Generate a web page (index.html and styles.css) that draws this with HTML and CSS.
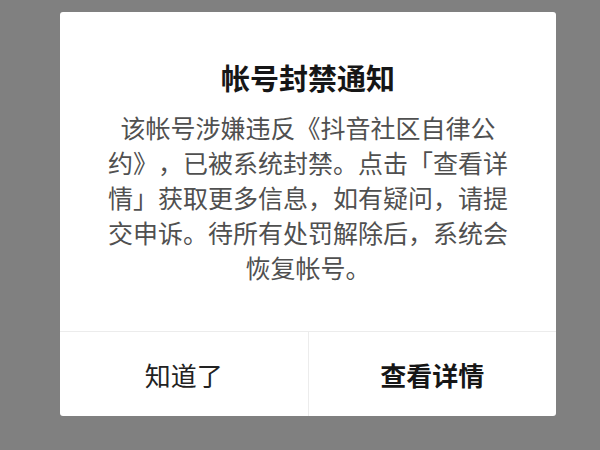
FILE: index.html
```html
<!DOCTYPE html>
<html lang="zh-CN">
<head>
    <meta charset="UTF-8">
    <title>帐号封禁通知</title>
    <link rel="stylesheet" href="styles.css">
</head>
<body>
    <!-- Ban notice dialog -->
    <div class="mask">
        <div class="dialog">
            <div class="dialog-content">
                <h2 class="dialog-title">帐号封禁通知</h2>
                <p class="dialog-text">该帐号涉嫌违反《抖音社区自律公约》，已被系统封禁。点击「查看详情」获取更多信息，如有疑问，请提交申诉。待所有处罚解除后，系统会恢复帐号。</p>
            </div>
            <div class="dialog-actions">
                <button class="dialog-btn" type="button">知道了</button>
                <button class="dialog-btn primary" type="button">查看详情</button>
            </div>
        </div>
    </div>
</body>
</html>
```

FILE: styles.css
```css
/* Basic Styling */
html, body {
    margin: 0;
    height: 100%;
}

body {
    font-family: "Noto Sans CJK SC", "Noto Sans", sans-serif;
    background-color: #808080;
    color: #161616;
}

.mask {
    display: flex;
    justify-content: center;
    padding-top: 12px;
}

.dialog {
    width: 496px;
    height: 404px;
    margin-left: 16px;
    background-color: #fff;
    border-radius: 3px;
    display: flex;
    flex-direction: column;
    overflow: hidden;
}

.dialog-content {
    flex: 1;
    padding: 45px 0 0;
    text-align: center;
}

.dialog-title {
    margin: 0;
    font-size: 29px;
    line-height: 40px;
    font-weight: 700;
    color: #161616;
}

.dialog-text {
    width: 400px;
    margin: 13px auto 0;
    font-size: 25px;
    line-height: 35px;
    color: #505050;
    text-spacing-trim: space-all;
}

/* Bottom buttons */
.dialog-actions {
    height: 84px;
    display: flex;
    border-top: 1px solid #ececec;
}

.dialog-btn {
    flex: 1;
    border: none;
    background: none;
    font-family: inherit;
    font-size: 26px;
    color: #222;
    padding: 0;
    cursor: pointer;
}

.dialog-btn + .dialog-btn {
    border-left: 1px solid #ececec;
}

.dialog-btn.primary {
    font-weight: 700;
    color: #161616;
}
```
